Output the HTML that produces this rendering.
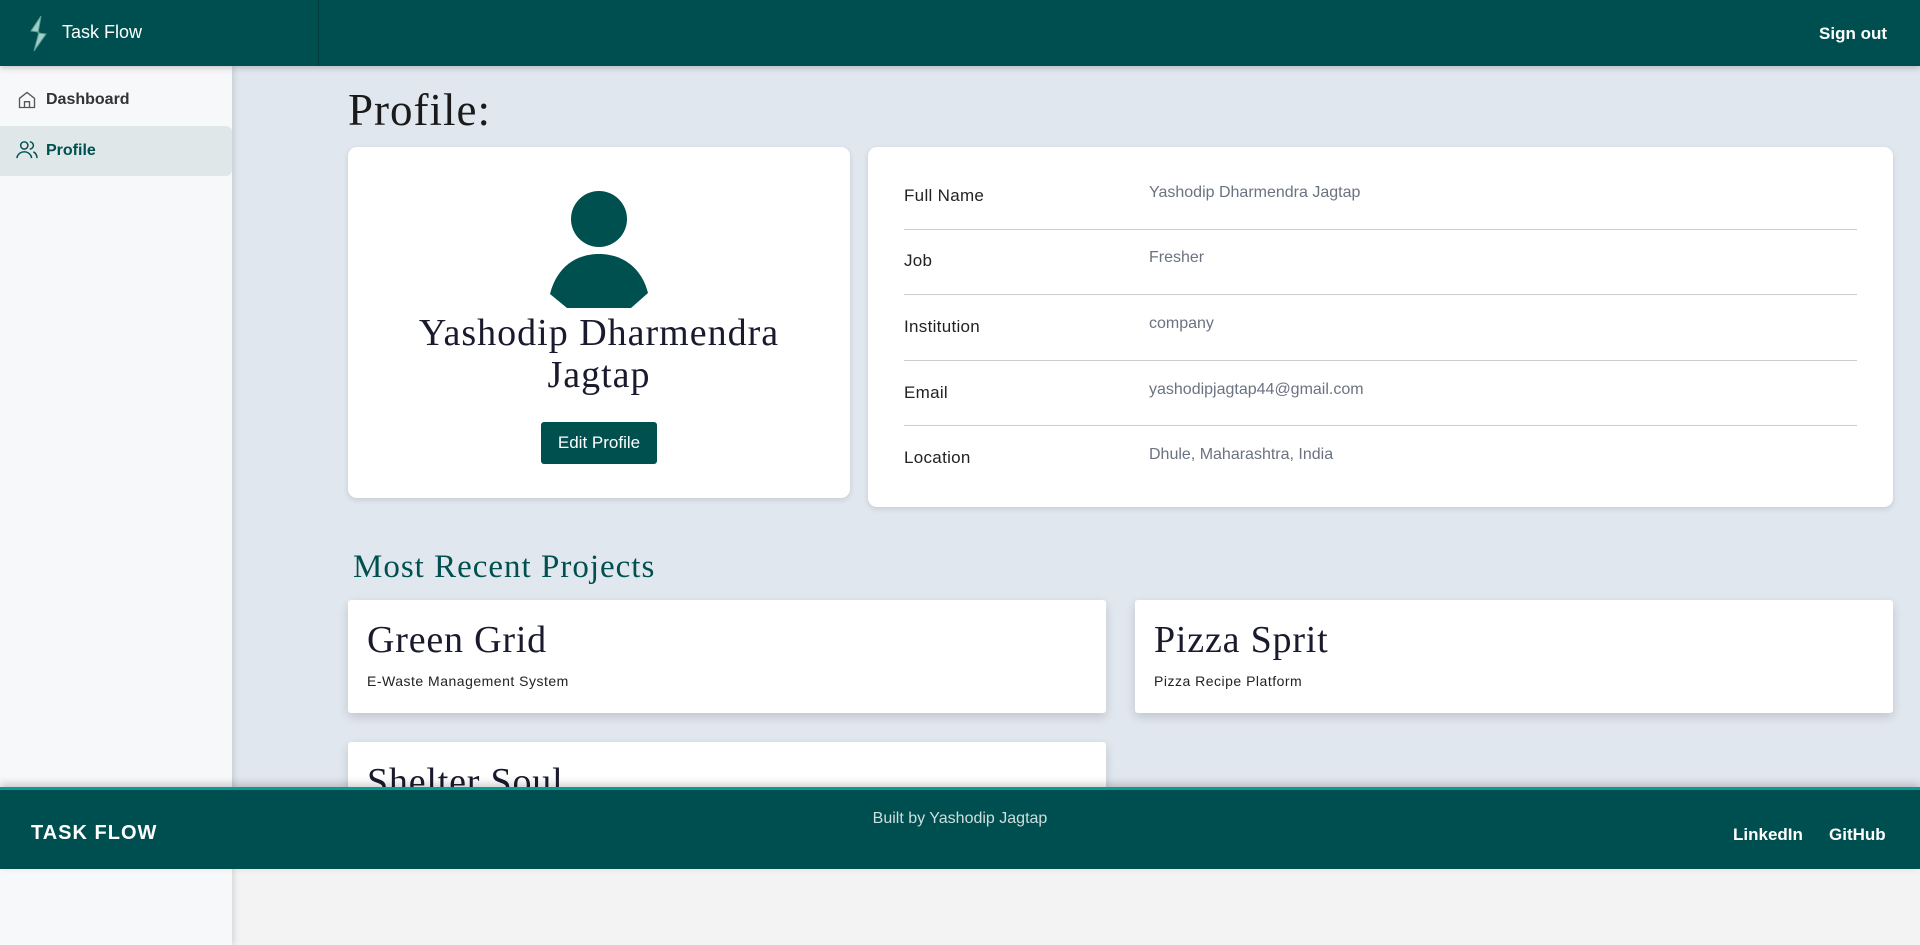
<!DOCTYPE html>
<html><head><meta charset="utf-8"><style>
*{margin:0;padding:0;box-sizing:border-box}
body{width:1920px;height:945px;overflow:hidden;background:#f3f3f3;font-family:"Liberation Sans",sans-serif;position:relative}
.a{position:absolute}
.serif{font-family:"Liberation Serif",serif}
.card{background:#fff;border-radius:9px;box-shadow:0 2px 6px rgba(0,0,0,.12)}
.pc{background:#fff;border-radius:3px;box-shadow:0 4px 10px rgba(0,0,0,.15)}
.lbl{left:36px;font-size:17px;color:#222;letter-spacing:.3px}
.val{left:281px;font-size:16px;color:#6b7280}
.hr{left:36px;right:36px;height:1px;background:#ccc}
</style></head><body>
<div class="a" style="left:232px;top:66px;width:1688px;height:721px;background:#e1e7ef"></div>
<div class="a" style="left:0;top:66px;width:232px;height:879px;background:#f7f8fa;box-shadow:2px 0 6px rgba(0,0,0,.12)"></div>
<div class="a" style="left:0;top:126px;width:232px;height:50px;background:#dfe7e8;border-radius:0 6px 6px 0"></div>
<svg class="a" style="left:17px;top:90px" width="20" height="20" viewBox="0 0 24 24" fill="none" stroke="#555" stroke-width="1.6"><path d="M3 10 L12 3 L21 10 V21 H3 Z"/><path d="M9 21 V14 H15 V21"/></svg>
<div class="a" style="left:46px;top:91px;font-size:16px;font-weight:bold;color:#333">Dashboard</div>
<svg class="a" style="left:16px;top:140px" width="22" height="20" viewBox="0 0 24 22" fill="none" stroke="#00504f" stroke-width="1.6"><circle cx="9" cy="6" r="4"/><path d="M1 20c0-4 4-7 8-7s8 3 8 7"/><path d="M15 2a4 4 0 0 1 0 8M19 13c2 1 4 3 4 7"/></svg>
<div class="a" style="left:46px;top:142px;font-size:16px;font-weight:bold;color:#00504f">Profile</div>

<div class="a" style="left:0;top:0;width:1920px;height:66px;background:#004f50;box-shadow:0 2px 6px rgba(0,0,0,.2)"></div>
<div class="a" style="left:318px;top:0;width:1px;height:66px;background:#003a3a"></div>
<svg class="a" style="left:27px;top:15px" width="22" height="37" viewBox="0 0 22 37"><path d="M14 1 L4 16 L12 17 L7 36 L19 19 L11 18 Z" fill="#9fd0c8" stroke="#5e9f98" stroke-width="1"/></svg>
<div class="a" style="left:62px;top:22px;font-size:18px;color:#fff">Task Flow</div>
<div class="a" style="right:33px;top:24px;font-size:17px;font-weight:bold;color:#fff">Sign out</div>

<div class="a serif" style="left:348px;top:84px;font-size:45px;color:#1a1a1a;letter-spacing:1px">Profile:</div>

<div class="a card" style="left:348px;top:147px;width:502px;height:351px">
<svg class="a" style="left:201px;top:44px" width="100" height="117" viewBox="0 0 100 117"><circle cx="50" cy="28" r="28" fill="#00504f"/><path d="M1 103 C8 75 28 63 50 63 C72 63 92 75 99 102 L82 117 L18 117 Z" fill="#00504f"/></svg>
<div class="a serif" style="left:0;width:100%;top:165px;text-align:center;font-size:38px;line-height:42px;color:#1a1a2e;letter-spacing:1px">Yashodip Dharmendra<br>Jagtap</div>
<div class="a" style="left:193px;top:275px;width:116px;height:42px;background:#00504f;border-radius:3px;color:#fff;font-size:17px;text-align:center;line-height:42px">Edit Profile</div>
</div>

<div class="a card" style="left:868px;top:147px;width:1025px;height:360px">
<div class="a lbl" style="top:39px">Full Name</div><div class="a val" style="top:37px">Yashodip Dharmendra Jagtap</div>
<div class="a hr" style="top:82px"></div>
<div class="a lbl" style="top:104px">Job</div><div class="a val" style="top:102px">Fresher</div>
<div class="a hr" style="top:147px"></div>
<div class="a lbl" style="top:170px">Institution</div><div class="a val" style="top:168px">company</div>
<div class="a hr" style="top:213px"></div>
<div class="a lbl" style="top:236px">Email</div><div class="a val" style="top:234px">yashodipjagtap44@gmail.com</div>
<div class="a hr" style="top:278px"></div>
<div class="a lbl" style="top:301px">Location</div><div class="a val" style="top:299px">Dhule, Maharashtra, India</div>
</div>

<div class="a serif" style="left:353px;top:549px;font-size:33px;color:#00504f;letter-spacing:1px">Most Recent Projects</div>

<div class="a pc" style="left:348px;top:600px;width:758px;height:113px">
<div class="a serif" style="left:19px;top:18px;font-size:38px;color:#1a1a2e;letter-spacing:.8px">Green Grid</div>
<div class="a" style="left:19px;top:73px;font-size:14px;color:#222;letter-spacing:.5px">E-Waste Management System</div></div>
<div class="a pc" style="left:1135px;top:600px;width:758px;height:113px">
<div class="a serif" style="left:19px;top:18px;font-size:38px;color:#1a1a2e;letter-spacing:.8px">Pizza Sprit</div>
<div class="a" style="left:19px;top:73px;font-size:14px;color:#222;letter-spacing:.5px">Pizza Recipe Platform</div></div>
<div class="a pc" style="left:348px;top:742px;width:758px;height:113px;overflow:hidden">
<div class="a serif" style="left:19px;top:18px;font-size:38px;color:#1a1a2e;letter-spacing:.8px">Shelter Soul</div></div>

<div class="a" style="left:0;top:787px;width:1920px;height:82px;background:#004f50;border-top:3px solid #0d9a94;box-shadow:0 -3px 8px rgba(0,0,0,.2)"></div>
<div class="a" style="left:31px;top:822px;font-size:20px;font-weight:bold;color:#fff;letter-spacing:1px">TASK FLOW</div>
<div class="a" style="left:0;width:1920px;top:810px;text-align:center;font-size:16px;color:#cfdede">Built by Yashodip Jagtap</div>
<div class="a" style="left:1733px;top:825px;font-size:17px;font-weight:bold;color:#fff">LinkedIn</div>
<div class="a" style="left:1829px;top:825px;font-size:17px;font-weight:bold;color:#fff">GitHub</div>
</body></html>
